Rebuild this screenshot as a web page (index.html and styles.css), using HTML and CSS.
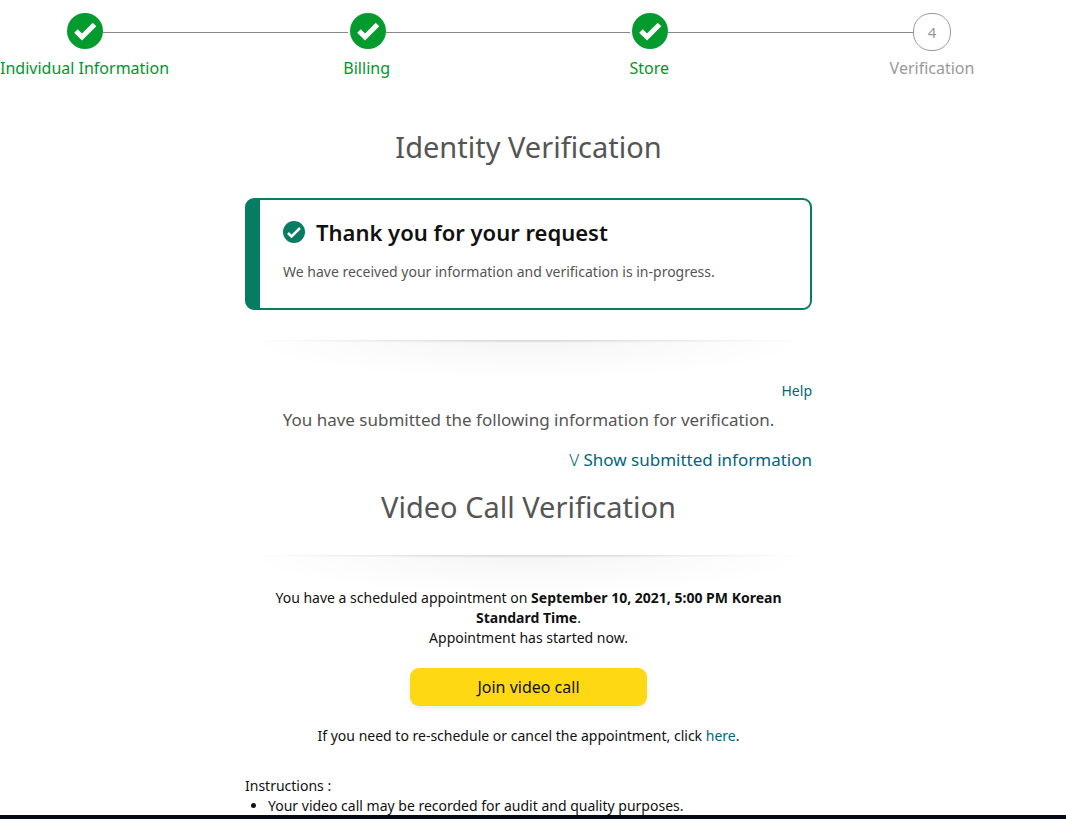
FILE: index.html
```
<!DOCTYPE html>
<html lang="en">
<head>
    <meta charset="UTF-8">
    <meta name="viewport" content="width=device-width, initial-scale=1.0">
    <title>Identity Verification</title>
    <link rel="stylesheet" href="styles.css">
</head>
<body>
    <div class="page">
        <ol class="stepper">
            <li class="step done">
                <div class="step-row">
                    <svg class="step-icon" viewBox="0 0 36 36" aria-hidden="true">
                        <circle cx="18" cy="18" r="18"/>
                        <path d="M9 18 15 24 27.500 11.500"/>
                    </svg>
                    <span class="step-line"></span>
                </div>
                <span class="step-label">Individual Information</span>
            </li>
            <li class="step done">
                <div class="step-row">
                    <svg class="step-icon" viewBox="0 0 36 36" aria-hidden="true">
                        <circle cx="18" cy="18" r="18"/>
                        <path d="M9 18 15 24 27.500 11.500"/>
                    </svg>
                    <span class="step-line"></span>
                </div>
                <span class="step-label">Billing</span>
            </li>
            <li class="step done">
                <div class="step-row">
                    <svg class="step-icon" viewBox="0 0 36 36" aria-hidden="true">
                        <circle cx="18" cy="18" r="18"/>
                        <path d="M9 18 15 24 27.500 11.500"/>
                    </svg>
                    <span class="step-line"></span>
                </div>
                <span class="step-label">Store</span>
            </li>
            <li class="step">
                <div class="step-row">
                    <span class="step-number">4</span>
                </div>
                <span class="step-label">Verification</span>
            </li>
        </ol>

        <main>
            <h1>Identity Verification</h1>

            <section class="alert">
                <div class="alert-title">
                    <svg class="alert-icon" viewBox="0 0 22 22" aria-hidden="true">
                        <circle cx="11" cy="11" r="11"/>
                        <path d="M5 12 8.500 15.500 17 7"/>
                    </svg>
                    <h2>Thank you for your request</h2>
                </div>
                <p>We have received your information and verification is in-progress.</p>
            </section>

            <div class="divider"></div>

            <section class="submitted">
                <a class="help" href="#">Help</a>
                <p>You have submitted the following information for verification.</p>
                <a class="show-info" href="#"><span class="chevron">V</span> Show submitted information</a>
            </section>

            <h1>Video Call Verification</h1>

            <div class="divider"></div>

            <section class="appointment">
                <p>You have a scheduled appointment on <strong>September 10, 2021, 5:00 PM Korean Standard Time</strong>.</p>
                <p>Appointment has started now.</p>
                <button type="button">Join video call</button>
                <p>If you need to re-schedule or cancel the appointment, click <a href="#">here</a>.</p>
            </section>

            <section class="instructions">
                <p>Instructions :</p>
                <ul>
                    <li>Your video call may be recorded for audit and quality purposes.</li>
                </ul>
            </section>
        </main>
    </div>
    <footer></footer>
</body>
</html>
```
FILE: styles.css
```
* {
    box-sizing: border-box;
}

body {
    display: flex;
    flex-direction: column;
    height: 100vh;
    margin: 0;
    font-family: "Noto Sans", "Open Sans", sans-serif;
    font-size: 14px;
    line-height: 20px;
    color: #111;
    background-color: #fff;
}

h1,
h2,
p,
ul,
ol {
    margin: 0;
    padding: 0;
}

a {
    color: #00667a;
    text-decoration: none;
}

a:hover {
    text-decoration: underline;
}

.page {
    flex: 1;
    min-height: 0;
    padding-right: 9px;
    overflow: hidden;
}

footer {
    height: 4px;
    background-color: #050a14;
}

/* Progress steps */
.stepper {
    display: flex;
    padding: 13px 41px 0 0;
    list-style: none;
}

.step {
    flex: 1;
    color: #999;
}

.step:last-child {
    flex: none;
}

.step.done {
    color: #00962c;
}

.step-row {
    display: flex;
    align-items: center;
    height: 38px;
    padding-left: 65px;
}

.step.done .step-row {
    padding-left: 67px;
}

.step-icon {
    width: 36px;
    height: 36px;
    margin-bottom: 2px;
}

.step-icon circle {
    fill: #049b2e;
}

.step-icon path {
    fill: none;
    stroke: #fff;
    stroke-width: 5;
}

.step-line {
    flex: 1;
    height: 1px;
    margin-right: -65px;
    background-color: #888;
}

.step-number {
    width: 38px;
    height: 38px;
    border: 1px solid #999;
    border-radius: 18px;
    font-size: 15px;
    line-height: 37px;
    text-align: center;
}

.step-label {
    display: block;
    width: 168px;
    margin-top: 7px;
    font-size: 16px;
    text-align: center;
    white-space: nowrap;
}

/* Main column */
main {
    max-width: 567px;
    margin: 0 auto;
    padding-top: 49px;
}

h1 {
    font-size: 29px;
    font-weight: 400;
    line-height: 40px;
    text-align: center;
    color: #555;
}

.alert {
    margin: 31px 0 30px;
    padding: 17px 22px 26px 23px;
    border: 2px solid #067d62;
    border-left-width: 15px;
    border-radius: 9px;
}

.alert-title {
    display: flex;
    align-items: center;
    gap: 11px;
}

.alert-icon {
    width: 22px;
    height: 22px;
}

.alert-icon circle {
    fill: #067d62;
}

.alert-icon path {
    fill: none;
    stroke: #fff;
    stroke-width: 2.5;
}

.alert h2 {
    font-size: 22px;
    font-weight: 600;
    line-height: 30px;
}

.alert p {
    margin-top: 15px;
    color: #555;
}

.divider {
    height: 40px;
    background:
        radial-gradient(50% 3px at 50% 0, rgba(0, 0, 0, 0.14), transparent),
        radial-gradient(50% 100% at 50% 0, rgba(0, 0, 0, 0.04), transparent);
}

.submitted {
    display: flex;
    flex-direction: column;
    padding-top: 1px;
    font-size: 17px;
    color: #555;
}

.submitted p {
    margin: 9px 0 20px;
    text-align: center;
}

.help,
.show-info {
    align-self: flex-end;
}

.help {
    font-size: 14px;
}

.chevron {
    font-weight: 300;
}

.submitted + h1 {
    margin: 17px 0 28px;
}

/* Appointment */
.appointment {
    display: flex;
    flex-direction: column;
    align-items: center;
    margin-top: -7px;
    padding: 0 18px;
    text-align: center;
}

.appointment button {
    width: 237px;
    height: 38px;
    margin: 20px 0;
    border: 0;
    border-radius: 9px;
    font-family: inherit;
    font-size: 16px;
    color: #111;
    background-color: #ffd814;
    box-shadow: 0 2px 5px rgba(213, 217, 217, 0.5);
    cursor: pointer;
}

.instructions {
    margin-top: 30px;
}

.instructions ul {
    padding-left: 23px;
}
```
